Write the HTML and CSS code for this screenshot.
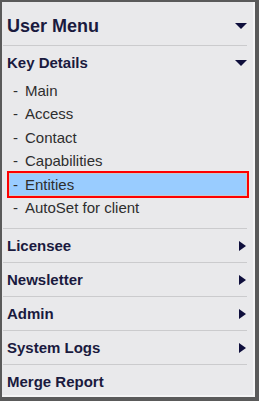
FILE: index.html
```html
<!DOCTYPE html>
<html lang="en">
<head>
    <meta charset="UTF-8" />
    <title>User Menu</title>
    <link rel="stylesheet" href="styles.css">
</head>
<body>
    <div class="frame">
        <div class="menu">
            <div class="menu-title">
                <span>User Menu</span>
                <span class="arrow-down"></span>
            </div>
            <div class="section open">
                <div class="section-head">
                    <span>Key Details</span>
                    <span class="arrow-down"></span>
                </div>
                <ul class="sub-list">
                    <li>Main</li>
                    <li>Access</li>
                    <li>Contact</li>
                    <li>Capabilities</li>
                    <li class="active">Entities</li>
                    <li>AutoSet for client</li>
                </ul>
            </div>
            <div class="section">
                <div class="section-head">
                    <span>Licensee</span>
                    <span class="arrow-right"></span>
                </div>
            </div>
            <div class="section">
                <div class="section-head">
                    <span>Newsletter</span>
                    <span class="arrow-right"></span>
                </div>
            </div>
            <div class="section">
                <div class="section-head">
                    <span>Admin</span>
                    <span class="arrow-right"></span>
                </div>
            </div>
            <div class="section">
                <div class="section-head">
                    <span>System Logs</span>
                    <span class="arrow-right"></span>
                </div>
            </div>
            <div class="section last">
                <div class="section-head">
                    <span>Merge Report</span>
                </div>
            </div>
        </div>
    </div>
</body>
</html>
```

FILE: styles.css
```css
* {
    margin: 0;
    padding: 0;
    box-sizing: border-box;
}

body {
    font-family: 'Liberation Sans', Arial, sans-serif;
    background: #ffffff;
}

.frame {
    width: 259px;
    height: 401px;
    border: 2px solid #5a5a5a;
    border-right-width: 4px;
    border-bottom-width: 4px;
}

.menu {
    height: 100%;
    background: #e9e9eb;
    border-right: 2px solid #f4f4f5;
    border-bottom: 2px solid #f4f4f5;
    padding-left: 1px;
}

.menu-title,
.section-head {
    display: flex;
    justify-content: space-between;
    align-items: center;
    margin-right: 6px;
    padding-left: 4px;
    font-weight: bold;
    color: #1a1a3e;
}

.menu-title {
    font-size: 18px;
    line-height: 36px;
    padding-top: 6px;
    padding-bottom: 1px;
    border-bottom: 1px solid #cbcbcd;
}

.section {
    margin-right: 6px;
    border-bottom: 1px solid #cbcbcd;
}

.section.last {
    border-bottom: none;
}

.section .section-head {
    margin-right: 0;
    font-size: 15px;
    line-height: 33px;
}

.section.open .section-head {
    line-height: 32px;
    padding-top: 1px;
}

.sub-list {
    list-style: none;
    padding-left: 6px;
    padding-bottom: 9px;
}

.sub-list li {
    height: 23.4px;
    line-height: 21.4px;
    padding-left: 3px;
    border: 1px solid transparent;
    font-size: 15px;
    color: #2e2e2e;
}

.sub-list li::before {
    content: "-";
    display: inline-block;
    width: 12px;
}

.sub-list li.active {
    background: #99ccff;
    border-color: #c4c8cc;
    outline: 2px solid #ff0000;
}

.arrow-down {
    width: 0;
    height: 0;
    border-left: 6px solid transparent;
    border-right: 6px solid transparent;
    border-top: 6px solid #0f0f3c;
}

.arrow-right {
    width: 0;
    height: 0;
    margin-right: 1px;
    border-top: 5px solid transparent;
    border-bottom: 5px solid transparent;
    border-left: 7px solid #0f0f3c;
}
```
